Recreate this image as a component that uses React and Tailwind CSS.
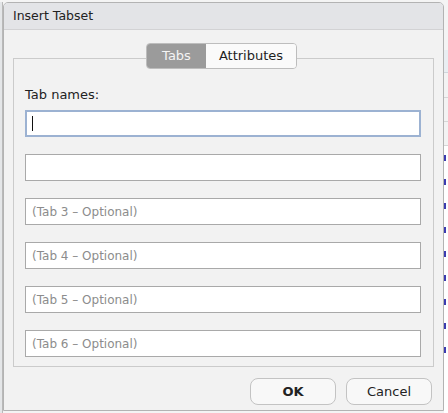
import React from 'react';

const INPUTS = ['', '', '(Tab 3 – Optional)', '(Tab 4 – Optional)', '(Tab 5 – Optional)', '(Tab 6 – Optional)'];

export default function App() {
  return (
    <div className="w-[448px] h-[413px] overflow-hidden bg-[#f4f4f4] flex pt-[2px] font-['DejaVu_Sans',sans-serif]">
      {/* left strip of the window behind */}
      <div className="w-[3px] shrink-0 bg-[#e4e6e8] border-r border-[#b9b9b9]" />

      {/* Dialog */}
      <div className="w-[441px] h-[409px] shrink-0 flex flex-col bg-[#f2f2f2] border border-[#b3b3b3] rounded-t-[5px] overflow-hidden">
        <div className="h-[27px] shrink-0 bg-[#e3e4e7] border-b border-[#d2d2d4] flex items-center pl-[9px] text-[12.5px] text-[#222]">
          Insert Tabset
        </div>

        <div className="relative mt-[28px] mx-[9px] h-[309px] border border-[#cbcbcb]">
          {/* Segmented tabs */}
          <div className="absolute left-[132px] top-[-16px] flex h-[26px] rounded-[4px] border border-[#bdbdbd] overflow-hidden text-[13px]">
            <div className="w-[59px] bg-[#9b9b9b] text-[#f4f4f4] flex items-center justify-center">Tabs</div>
            <div className="w-[90px] bg-[#fafafa] text-[#1e1e1e] flex items-center justify-center">Attributes</div>
          </div>

          <div className="pt-[27px] pl-[11px] pr-[12px] flex flex-col">
            <div className="text-[13px] text-[#222] h-[17px] leading-[17px] mb-[7px]">Tab names:</div>
            <div className="flex flex-col gap-[17px]">
              {INPUTS.map((p, i) => (
                <div
                  key={i}
                  className={`h-[27px] bg-white flex items-center px-[6px] text-[12px] text-[#8c8c8c] ${
                    i === 0 ? 'border-2 border-[#9cb2d2] pl-[5px]' : 'border border-[#a9a9a9]'
                  }`}
                >
                  {i === 0 ? <span className="w-px h-[15px] bg-[#111]" /> : p}
                </div>
              ))}
            </div>
          </div>
        </div>

        <div className="flex justify-end gap-[10px] mt-[11px] pr-[11px]">
          <button className="w-[86px] h-[27px] rounded-[8px] border border-[#c3c3c3] bg-[#f8f8f8] text-[13px] font-bold text-[#222]">OK</button>
          <button className="w-[86px] h-[27px] rounded-[8px] border border-[#c3c3c3] bg-[#f8f8f8] text-[13px] text-[#222]">Cancel</button>
        </div>
      </div>

      {/* right strip of the window behind */}
      <div className="flex-1 flex flex-col bg-white">
        <div className="h-[48px] bg-[#f4f4f4]" />
        <div className="h-[23px] bg-[#e9eef2] border-b border-[#cfd6dc]" />
        <div className="h-[25px] bg-[#f3f3f3] border-b border-[#d6d6d6]" />
        <div className="h-[24px] bg-[#f3f3f3] border-b border-[#d6d6d6]" />
        <div className="h-[24px] bg-[#f3f3f3] border-b border-[#d6d6d6]" />
        {[0, 1, 2, 3, 4, 5, 6, 7, 8].map(i => (
          <div key={i} className="h-[24px] flex items-center">
            <span className="w-[2px] h-[6px] bg-[#3b3bb0]" />
          </div>
        ))}
      </div>
    </div>
  );
}
